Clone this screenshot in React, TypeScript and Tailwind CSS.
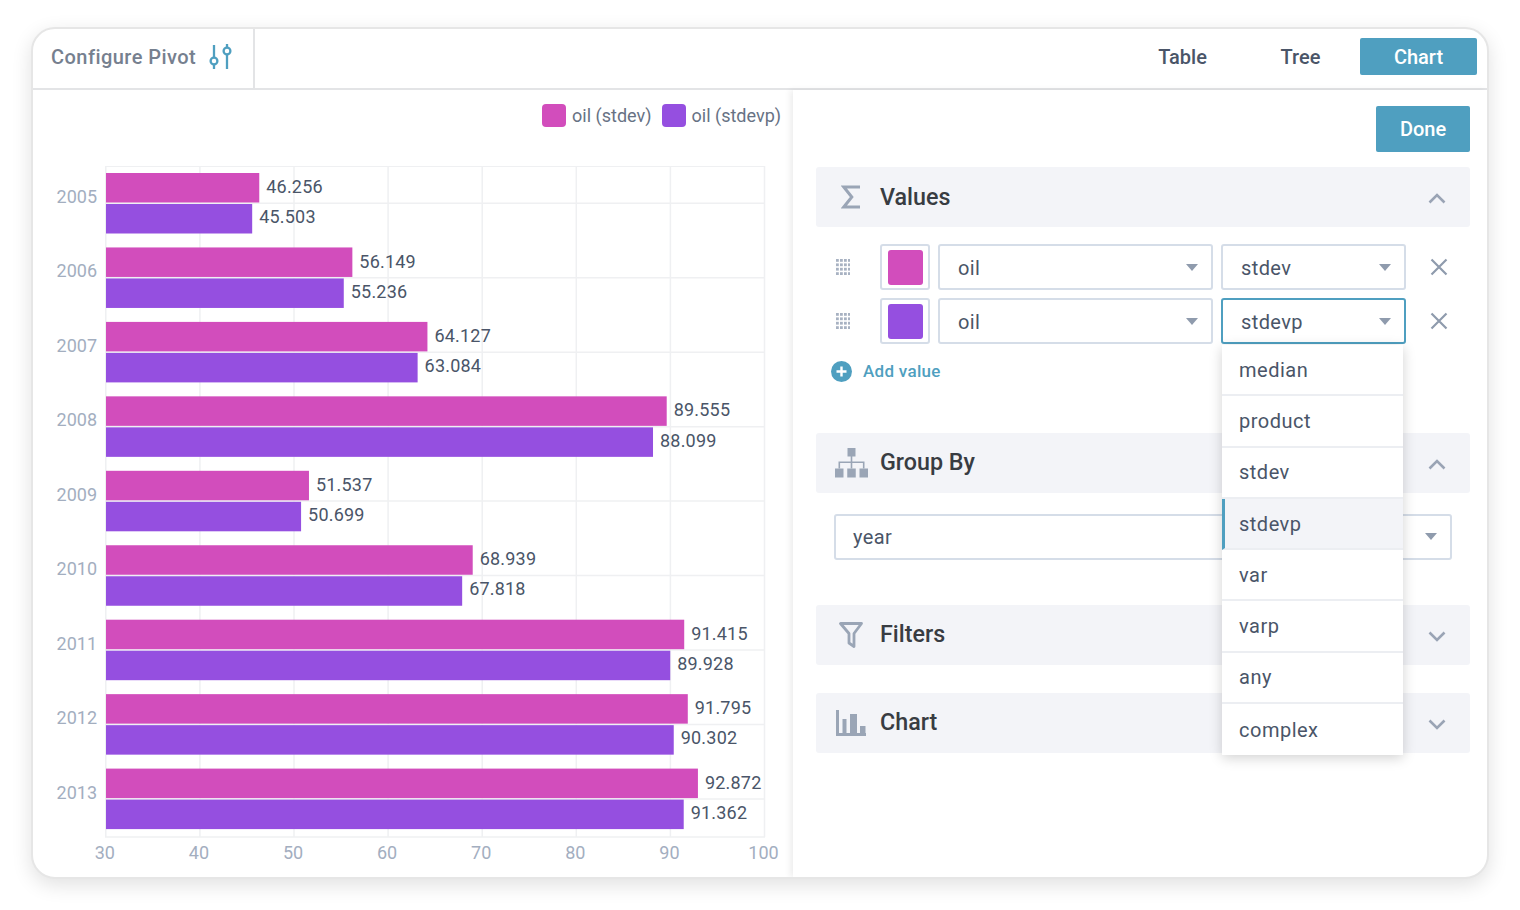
import React from "react";

const PINK = "#d24dbc";
const PURPLE = "#954fe0";

const rows = [
  { year: "2005", a: 46.256, b: 45.503 },
  { year: "2006", a: 56.149, b: 55.236 },
  { year: "2007", a: 64.127, b: 63.084 },
  { year: "2008", a: 89.555, b: 88.099 },
  { year: "2009", a: 51.537, b: 50.699 },
  { year: "2010", a: 68.939, b: 67.818 },
  { year: "2011", a: 91.415, b: 89.928 },
  { year: "2012", a: 91.795, b: 90.302 },
  { year: "2013", a: 92.872, b: 91.362 },
];

const ticks = [30, 40, 50, 60, 70, 80, 90, 100];
const options = ["median", "product", "stdev", "stdevp", "var", "varp", "any", "complex"];

const xOf = (v: number) => 106.3 + (v - 30) * 9.41;

function Chart() {
  return (
    <svg viewBox="33 150 759 720" className="block h-[720px] w-[759px]" style={{ fontFamily: "Roboto, sans-serif" }}>
      {ticks.map((t) => (
        <line key={t} x1={xOf(t) - 0.5} x2={xOf(t) - 0.5} y1={166} y2={837} stroke="#eff0f2" strokeWidth={1.5} />
      ))}
      <line x1={105} x2={765} y1={166.5} y2={166.5} stroke="#eff0f2" strokeWidth={1} />
      {rows.map((_, i) => (
        <line key={i} x1={105} x2={765} y1={203.3 + 74.45 * i} y2={203.3 + 74.45 * i} stroke="#eff0f2" strokeWidth={1.5} />
      ))}
      <line x1={105} x2={765} y1={837} y2={837} stroke="#eff0f2" strokeWidth={1.5} />
      {rows.map((r, i) => {
        const top = 173 + 74.45 * i;
        return (
          <g key={r.year}>
            <text x={97} y={top + 30} textAnchor="end" fontSize={18} fill="#a3aebf">
              {r.year}
            </text>
            <rect x={106} y={top} width={xOf(r.a) - 106} height={29.5} fill={PINK} />
            <rect x={106} y={top + 31} width={xOf(r.b) - 106} height={29.5} fill={PURPLE} />
            <text x={xOf(r.a) + 7} y={top + 20.1} fontSize={18} letterSpacing={0.2} fill="#4a5568">
              {r.a.toFixed(3)}
            </text>
            <text x={xOf(r.b) + 7} y={top + 50.2} fontSize={18} letterSpacing={0.2} fill="#4a5568">
              {r.b.toFixed(3)}
            </text>
          </g>
        );
      })}
      {ticks.map((t) => (
        <text key={t} x={xOf(t) - 1.5} y={859} textAnchor="middle" fontSize={18} fill="#a3aebf">
          {t}
        </text>
      ))}
    </svg>
  );
}

function Caret() {
  return (
    <svg width="12" height="7" viewBox="0 0 12 7" className="shrink-0">
      <path d="M0 0h12L6 7z" fill="#8f9bad" />
    </svg>
  );
}

function Chevron({ up }: { up?: boolean }) {
  return (
    <svg width="18" height="11" viewBox="0 0 18 11" className="shrink-0">
      <path d={up ? "M1.5 9.5 9 2l7.5 7.5" : "M1.5 1.5 9 9l7.5-7.5"} fill="none" stroke="#9aa4b5" strokeWidth="2.6" />
    </svg>
  );
}

function Section({ title, icon, up }: { title: string; icon: React.ReactNode; up?: boolean }) {
  return (
    <div className="flex h-[60px] items-center rounded-[3px] bg-[#f3f4f8] pr-[24px]">
      <div className="flex w-[64px] justify-center pl-[6px]">{icon}</div>
      <span className="pt-px text-[23.3px] font-medium leading-none text-[#383c42]">{title}</span>
      <div className="ml-auto pt-[3px]">
        <Chevron up={up} />
      </div>
    </div>
  );
}

function Select({ value, className, open }: { value: string; className: string; open?: boolean }) {
  return (
    <div
      className={`flex h-[46px] items-center justify-between rounded-[3px] border-2 bg-white pl-[18px] pr-[13px] text-[20px] tracking-[0.4px] text-[#4a5568] ${
        open ? "border-[#4f9fc0]" : "border-[#d5dde8]"
      } ${className}`}
    >
      <span className="pt-px">{value}</span>
      <Caret />
    </div>
  );
}

function Grip() {
  const dots = [0, 1, 2, 3];
  return (
    <svg width="14" height="16" viewBox="0 0 14 16" className="shrink-0">
      {dots.map((y) =>
        dots.map((x) => <rect key={`${x}-${y}`} x={x * 4} y={y * 4.4} width="2.8" height="2.8" fill="#a8b2c2" />)
      )}
    </svg>
  );
}

function ValueRow({ color, agg, open }: { color: string; agg: string; open?: boolean }) {
  return (
    <div className="flex items-center">
      <div className="ml-[20px] w-[44px]">
        <Grip />
      </div>
      <div className="flex h-[46px] w-[50px] items-center justify-center rounded-[3px] border-2 border-[#d5dde8]">
        <div className="h-[35px] w-[35px] rounded-[3px]" style={{ backgroundColor: color }} />
      </div>
      <Select value="oil" className="ml-[8px] w-[275px]" />
      <div className="relative ml-[8px]">
        <Select value={agg} open={open} className="w-[185px]" />
        {open && (
          <div className="absolute left-[1px] top-[47px] z-10 w-[181px] bg-white shadow-[0_3px_12px_rgba(0,0,0,0.18)]">
            {options.map((o, i) => (
              <div
                key={o}
                className={`flex h-[51.3px] items-center border-[#eceef2] pl-[17px] text-[20px] tracking-[0.5px] text-[#4a5568] ${
                  i < options.length - 1 ? "border-b-2" : ""
                } ${o === "stdevp" ? "border-l-[3px] !pl-[14px] bg-[#f3f4f8] [border-left-color:#4f9fc0]" : ""}`}
              >
                {o}
              </div>
            ))}
          </div>
        )}
      </div>
      <svg width="18" height="18" viewBox="0 0 18 18" className="ml-[24px] shrink-0">
        <path d="M1.5 1.5l15 15M16.5 1.5l-15 15" stroke="#8f9bad" strokeWidth="2.2" fill="none" />
      </svg>
    </div>
  );
}

export default function App() {
  return (
    <div className="h-[910px] w-[1520px] overflow-hidden bg-white pl-[31px] pt-[27px] font-['Roboto',sans-serif]">
      <div className="flex h-[852px] w-[1458px] flex-col overflow-hidden rounded-[24px] border-2 border-[#e6e6e6] bg-white shadow-[0_6px_20px_rgba(0,0,0,0.12)]">
        {/* HEADER */}
        <div className="flex h-[61px] shrink-0 items-center border-b-2 border-[#e3e4e6]">
          <div className="flex h-full w-[222px] items-center gap-[13px] border-r-2 border-[#e3e4e6] pb-[4px] pl-[18px]">
            <span className="text-[20px] font-medium tracking-[0.45px] text-[#76808f]">Configure Pivot</span>
            <svg width="24" height="25" viewBox="0 0 24 25" fill="none" stroke="#4f9fc0" strokeWidth="2.3">
              <path d="M5 1v12.5M5 20.5V25M18 0v3M18 11v14" />
              <circle cx="5" cy="17" r="3.4" />
              <circle cx="18" cy="7" r="3.4" />
            </svg>
          </div>
          <div className="ml-auto flex items-center gap-px pb-[4px] pr-[10px] text-[20px] font-medium">
            <div className="flex h-[37px] w-[117px] items-center justify-center text-[#4a5568]">Table</div>
            <div className="flex h-[37px] w-[117px] items-center justify-center text-[#4a5568]">Tree</div>
            <div className="flex h-[37px] w-[117px] items-center justify-center rounded-[2px] bg-[#4f9fc0] text-white">Chart</div>
          </div>
        </div>

        <div className="flex min-h-0 flex-1">
          {/* CHART PANEL */}
          <div className="w-[760px] shrink-0">
            <div className="flex h-[60px] items-start justify-end pr-[12px] pt-[14px] text-[18px] leading-[23px] text-[#677284]">
              <div className="h-[23px] w-[24px] rounded-[4px] bg-[#d24dbc]" />
              <span className="ml-[6px]">oil (stdev)</span>
              <div className="ml-[10px] h-[23px] w-[24px] rounded-[4px] bg-[#954fe0]" />
              <span className="ml-[6px]">oil (stdevp)</span>
            </div>
            <Chart />
          </div>

          {/* CONFIG PANEL */}
          <div className="relative min-w-0 flex-1 pl-[23px] pr-[17px] pt-[16px] shadow-[-3px_0_6px_rgba(0,0,0,0.07)]">
            <div className="flex justify-end">
              <div className="flex h-[46px] w-[94px] items-center justify-center rounded-[2px] bg-[#4f9fc0] text-[20px] font-medium text-white">Done</div>
            </div>

            <div className="mt-[15px]">
              <Section
                title="Values"
                up
                icon={
                  <svg width="20" height="24" viewBox="0 0 20 24" fill="none" stroke="#9aa5b6" strokeWidth="3">
                    <path d="M19 2H2.8l8 10-8 10H19" />
                  </svg>
                }
              />
              <div className="flex flex-col gap-[8px] pt-[17px]">
                <ValueRow color={PINK} agg="stdev" />
                <ValueRow color={PURPLE} agg="stdevp" open />
              </div>
              <div className="ml-[15px] mt-[15px] flex items-center gap-[11px]">
                <svg width="21" height="21" viewBox="0 0 21 21">
                  <circle cx="10.5" cy="10.5" r="10.5" fill="#4f9fc0" />
                  <path d="M10.5 5.5v10M5.5 10.5h10" stroke="#fff" strokeWidth="2.4" />
                </svg>
                <span className="text-[17px] font-medium tracking-[0.3px] text-[#4f9fc0]">Add value</span>
              </div>
            </div>

            <div className="mt-[48px]">
              <Section
                title="Group By"
                up
                icon={
                  <svg width="33" height="30" viewBox="0 0 33 30" fill="#9aa5b6">
                    <rect x="12.5" y="0" width="8" height="8.5" />
                    <rect x="0" y="20.5" width="8.5" height="9" />
                    <rect x="12.25" y="20.5" width="8.5" height="9" />
                    <rect x="24.5" y="20.5" width="8.5" height="9" />
                    <path d="M15.7 8h1.6v5.5H29.5v7h-1.6v-5.4H17.3v5.4h-1.6v-5.4H5.1v5.4H3.5v-7h12.2z" />
                  </svg>
                }
              />
              <div className="ml-[18px] mt-[21px] flex h-[46px] w-[618px] items-center justify-between rounded-[3px] border-2 border-[#d5dde8] pl-[17px] pr-[13px] text-[20px] tracking-[0.4px] text-[#4a5568]">
                <span>year</span>
                <Caret />
              </div>
            </div>

            <div className="mt-[45px]">
              <Section
                title="Filters"
                icon={
                  <svg width="24" height="26" viewBox="0 0 24 26" fill="none" stroke="#9aa5b6" strokeWidth="2.8" strokeLinejoin="round">
                    <path d="M1.5 1.5h21L15 11.5v13l-5-3.5v-9.5z" />
                  </svg>
                }
              />
            </div>
            <div className="mt-[28px]">
              <Section
                title="Chart"
                icon={
                  <svg width="30" height="26" viewBox="0 0 30 26" fill="#9aa5b6">
                    <path d="M0 0h3v23h27v3H0z" />
                    <rect x="6.5" y="9" width="4" height="15" />
                    <rect x="14" y="4" width="7" height="20" />
                    <rect x="24" y="16" width="5.5" height="8" />
                  </svg>
                }
              />
            </div>
          </div>
        </div>
      </div>
    </div>
  );
}
